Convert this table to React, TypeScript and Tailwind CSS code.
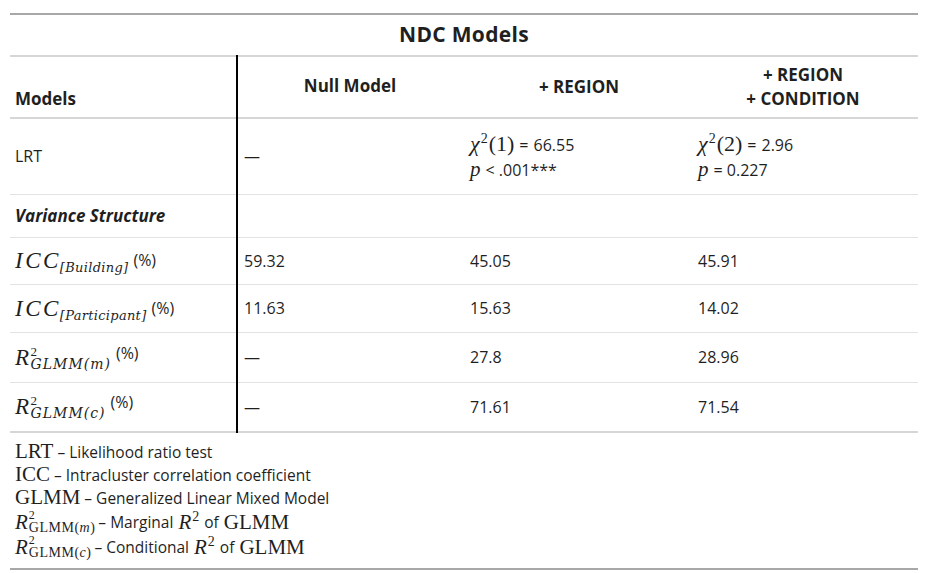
import React from "react";

const sans = "font-['Open_Sans',_'Noto_Sans',_sans-serif]";
const serif = "font-['Liberation_Serif',_'DejaVu_Serif',_serif]";
const dserif = "font-['DejaVu_Serif',_'Liberation_Serif',_serif]";

// big italic letter with optional superscript 2 and a subscript, KaTeX-like
function Sub({ base, sub, sup, track }: { base: string; sub: string; sup?: boolean; track: string }) {
  return (
    <span className="inline-flex items-start">
      <span className={`${serif} italic text-[23px] leading-[26px] tracking-[2.5px]`}>{base}</span>
      <span className="inline-flex flex-col -ml-[1px]">
        <span className={`${serif} text-[13px] leading-[11px] h-[11px] mt-[1px]`}>{sup ? "2" : "\u00a0"}</span>
        <span className={`${dserif} italic text-[13px] leading-[15px] ${track}`}>{sub}</span>
      </span>
    </span>
  );
}

function Chi({ df }: { df: string }) {
  return (
    <span className={`${serif} text-[22px] leading-[24px]`}>
      <span className="italic">χ</span>
      <span className="text-[14px] relative -top-[8px] ml-[1px]">2</span>
      <span className="ml-[1px]">({df})</span>
    </span>
  );
}

function P() {
  return <span className={`${serif} italic text-[21px] leading-[24px] mr-[5px]`}>p</span>;
}

const rows = [
  { label: <Sub base="ICC" sub="[Building]" track="tracking-[0.3px]" />, vals: ["59.32", "45.05", "45.91"], h: "h-[47px]" },
  { label: <Sub base="ICC" sub="[Participant]" track="tracking-[0.3px]" />, vals: ["11.63", "15.63", "14.02"], h: "h-[48px]" },
  { label: <Sub base="R" sup sub="GLMM(m)" track="tracking-[1px] text-[14px]" />, vals: ["—", "27.8", "28.96"], h: "h-[50px]" },
  { label: <Sub base="R" sup sub="GLMM(c)" track="tracking-[1px] text-[14px]" />, vals: ["—", "71.61", "71.54"], h: "h-[50px]" },
];

function FootR({ sub }: { sub: string }) {
  return (
    <span className="inline-flex items-start">
      <span className={`${serif} italic text-[21px] leading-[24px] tracking-[1px]`}>R</span>
      <span className={`${serif} inline-flex flex-col`}>
        <span className="text-[12px] leading-[10px] h-[10px]">2</span>
        <span className="text-[14px] leading-[16px] tracking-[0.5px]">
          GLMM(<span className="italic">{sub}</span>)
        </span>
      </span>
    </span>
  );
}

function R2() {
  return (
    <span className={`${serif} text-[21px] leading-[24px]`}>
      <span className="italic">R</span>
      <span className="text-[14px] relative -top-[8px] ml-[1px]">2</span>
    </span>
  );
}

export default function App() {
  return (
    <div className={`w-[930px] h-[573px] bg-white px-[10px] pt-[13px] text-[#1f1f1f] ${sans}`}>
      <table className="w-[908px] table-fixed border-collapse text-[16px]">
        <colgroup>
          <col className="w-[227px]" />
          <col className="w-[225px]" />
          <col className="w-[228px]" />
          <col className="w-[228px]" />
        </colgroup>
        <thead>
          <tr className="h-[42px] border-t-2 border-b-2 border-t-[#a8a8a8] border-b-[#d6d6d6]">
            <th colSpan={4} className="text-[21px] font-bold text-center tracking-[0.3px]">NDC Models</th>
          </tr>
          <tr className="h-[62px] border-b-2 border-[#d6d6d6]">
            <th className="text-left align-bottom pb-[6px] pl-[5px] text-[17px] font-bold border-r-2 border-r-black">Models</th>
            <th className="text-center text-[17px] font-bold pb-[2px]">Null Model</th>
            <th className="text-center text-[17px] font-bold pl-[6px]">+ REGION</th>
            <th className="text-center text-[17px] font-bold leading-[24px] pr-[2px]">
              + REGION<br />+ CONDITION
            </th>
          </tr>
        </thead>
        <tbody>
          <tr className="h-[76px] border-b border-[#e3e3e3]">
            <td className="pl-[5px] border-r-2 border-r-black">LRT</td>
            <td className="pl-[6px]">—</td>
            <td className="pl-[8px]">
              <div className="flex items-baseline h-[25px]"><Chi df="1" /><span className="ml-[5px]">=</span><span className="ml-[5px]">66.55</span></div>
              <div className="flex items-baseline h-[24px]"><P /><span>&lt; .001***</span></div>
            </td>
            <td className="pl-[8px]">
              <div className="flex items-baseline h-[25px]"><Chi df="2" /><span className="ml-[5px]">=</span><span className="ml-[5px]">2.96</span></div>
              <div className="flex items-baseline h-[24px]"><P /><span>= 0.227</span></div>
            </td>
          </tr>
          <tr className="h-[43px] border-b border-[#e3e3e3]">
            <td className="pl-[5px] font-bold italic text-[17px] border-r-2 border-r-black">Variance Structure</td>
            <td />
            <td />
            <td />
          </tr>
          {rows.map((r, i) => (
            <tr key={i} className={`${r.h} ${i === rows.length - 1 ? "border-b-2 border-[#d6d6d6]" : "border-b border-[#e3e3e3]"}`}>
              <td className="pl-[5px] border-r-2 border-r-black">
                <span className="inline-flex items-start gap-[5px] pt-[2px]">
                  {r.label}
                  <span className={`text-[16px] leading-[20px] ${i > 1 ? "-mt-[2px]" : "mt-[2px]"}`}>(%)</span>
                </span>
              </td>
              {r.vals.map((v, j) => (
                <td key={j} className={j === 0 ? "pl-[6px]" : "pl-[8px]"}>{v}</td>
              ))}
            </tr>
          ))}
        </tbody>
      </table>
      <div className="w-[908px] border-b-2 border-[#a8a8a8] pt-[7px] pb-[8px] pl-[5px] text-[15.5px]">
        <div className="flex items-baseline h-[23px]">
          <span className={`${serif} text-[21px] leading-[23px]`}>LRT</span>
          <span className="ml-[4px]">– Likelihood ratio test</span>
        </div>
        <div className="flex items-baseline h-[23px]">
          <span className={`${serif} text-[21px] leading-[23px]`}>ICC</span>
          <span className="ml-[4px]">– Intracluster correlation coefficient</span>
        </div>
        <div className="flex items-baseline h-[24px]">
          <span className={`${serif} text-[21px] leading-[23px]`}>GLMM</span>
          <span className="ml-[4px]">– Generalized Linear Mixed Model</span>
        </div>
        <div className="flex items-start h-[25px]">
          <FootR sub="m" />
          <span className="ml-[3px] leading-[24px]">– Marginal</span>
          <span className="ml-[5px]"><R2 /></span>
          <span className="ml-[5px] leading-[24px]">of</span>
          <span className={`${serif} text-[21px] leading-[24px] ml-[5px]`}>GLMM</span>
        </div>
        <div className="flex items-start h-[25px]">
          <FootR sub="c" />
          <span className="ml-[3px] leading-[24px]">– Conditional</span>
          <span className="ml-[5px]"><R2 /></span>
          <span className="ml-[5px] leading-[24px]">of</span>
          <span className={`${serif} text-[21px] leading-[24px] ml-[5px]`}>GLMM</span>
        </div>
      </div>
    </div>
  );
}
